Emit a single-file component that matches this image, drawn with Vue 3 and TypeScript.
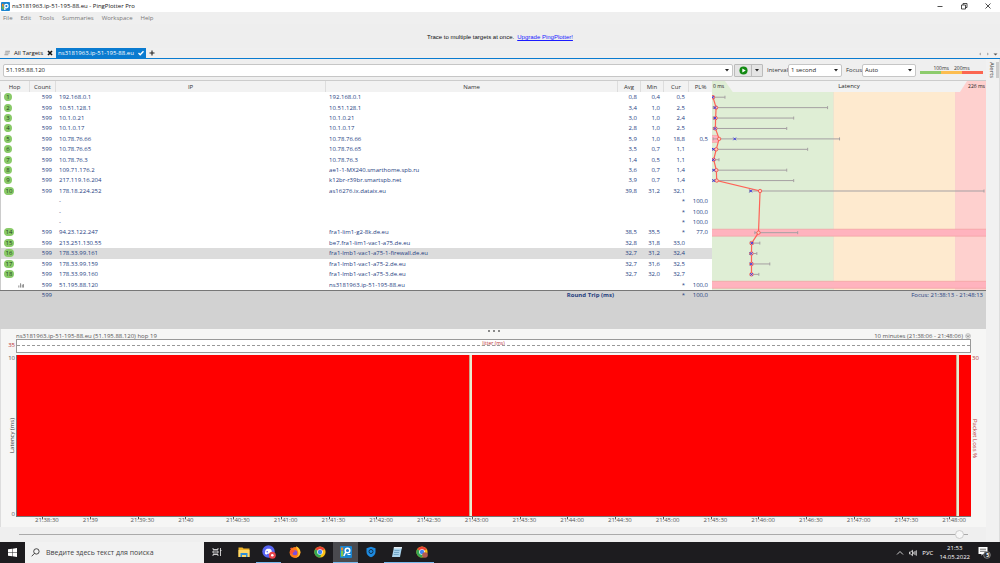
<script setup lang="ts">
import { ref } from 'vue'

interface Hop {
  n: string
  ip: string
  name: string
  avg: string
  min: string
  cur: string
  loss: string
  max?: number
  band?: number
}

const menus = ['File', 'Edit', 'Tools', 'Summaries', 'Workspace', 'Help']
const address = ref('51.195.88.120')
const timeline = ref(996)

const hops: Hop[] = [
  { n: '1', ip: '192.168.0.1', name: '192.168.0.1', avg: '0,8', min: '0,4', cur: '0,5', loss: '', max: 13 },
  { n: '2', ip: '10.51.128.1', name: '10.51.128.1', avg: '3,4', min: '1,0', cur: '2,5', loss: '', max: 116 },
  { n: '3', ip: '10.1.0.21', name: '10.1.0.21', avg: '3,0', min: '1,0', cur: '2,4', loss: '', max: 82 },
  { n: '4', ip: '10.1.0.17', name: '10.1.0.17', avg: '2,8', min: '1,0', cur: '2,5', loss: '', max: 75 },
  { n: '5', ip: '10.78.76.66', name: '10.78.76.66', avg: '5,9', min: '1,0', cur: '18,8', loss: '0,5', max: 128, band: 6 },
  { n: '6', ip: '10.78.76.65', name: '10.78.76.65', avg: '3,5', min: '0,7', cur: '1,1', loss: '', max: 96 },
  { n: '7', ip: '10.78.76.3', name: '10.78.76.3', avg: '1,4', min: '0,5', cur: '1,1', loss: '', max: 7 },
  { n: '8', ip: '109.71.176.2', name: 'ae1-1-MX240.smarthome.spb.ru', avg: '3,6', min: '0,7', cur: '1,4', loss: '', max: 75 },
  { n: '9', ip: '217.119.16.204', name: 'k12br-r39br.smartspb.net', avg: '3,9', min: '0,7', cur: '1,4', loss: '', max: 82 },
  { n: '10', ip: '178.18.224.252', name: 'as16276.ix.dataix.eu', avg: '39,8', min: '31,2', cur: '32,1', loss: '', max: 273 },
  { n: '', ip: '-', name: '', avg: '', min: '', cur: '*', loss: '100,0' },
  { n: '', ip: '-', name: '', avg: '', min: '', cur: '*', loss: '100,0' },
  { n: '', ip: '-', name: '', avg: '', min: '', cur: '*', loss: '100,0' },
  { n: '14', ip: '94.23.122.247', name: 'fra1-lim1-g2-8k.de.eu', avg: '38,5', min: '35,5', cur: '*', loss: '77,0', max: 86, band: 275 },
  { n: '15', ip: '213.251.130.55', name: 'be7.fra1-lim1-vac1-a75.de.eu', avg: '32,8', min: '31,8', cur: '33,0', loss: '', max: 48 },
  { n: '16', ip: '178.33.99.161', name: 'fra1-lmb1-vac1-a75-1-firewall.de.eu', avg: '32,7', min: '31,2', cur: '32,4', loss: '', max: 45 },
  { n: '17', ip: '178.33.99.159', name: 'fra1-lmb1-vac1-a75-2.de.eu', avg: '32,7', min: '31,6', cur: '32,5', loss: '', max: 58 },
  { n: '18', ip: '178.33.99.160', name: 'fra1-lmb1-vac1-a75-3.de.eu', avg: '32,7', min: '32,0', cur: '32,7', loss: '', max: 47 },
  { n: 'end', ip: '51.195.88.120', name: 'ns3181963.ip-51-195-88.eu', avg: '', min: '', cur: '*', loss: '100,0', band: 275 },
]

const ms = (s: string): number => parseFloat(s.replace(',', '.')) * 1.212
const pitch = 198 / 19
const marks = hops.map((h, i) => ({
  y: pitch * (i + 0.5),
  band: h.band,
  max: h.max,
  avg: h.avg ? ms(h.avg) : null,
  min: h.min ? ms(h.min) : 0,
  cur: h.cur !== '*' ? ms(h.cur) : null,
}))
const route = marks
  .filter((m) => m.avg !== null)
  .map((m) => `${m.avg},${m.y}`)
  .join(' ')

const ticks = [
  '21:38:30', '21:39', '21:39:30', '21:40', '21:40:30', '21:41:00', '21:41:30', '21:42:00', '21:42:30', '21:43:00',
  '21:43:30', '21:44:00', '21:44:30', '21:45:00', '21:45:30', '21:46:00', '21:46:30', '21:47:00', '21:47:30', '21:48:00',
]
</script>

<template>
  <div class="desktop">
    <header class="titlebar">
      <svg class="app-icon" viewBox="0 0 10 10">
        <rect width="10" height="10" rx="1" fill="#1a84d0" />
        <path d="M1 2h2v6H1z" fill="#f08a24" />
        <path d="M1 5h2v3H1z" fill="#5cb85c" />
        <circle cx="6" cy="4.500" r="2.600" fill="#fff" />
        <circle cx="6" cy="4.500" r="1.200" fill="#1a84d0" />
        <path d="M3.500 6h1.500v3H3.500z" fill="#fff" />
      </svg>
      <h1>ns3181963.ip-51-195-88.eu - PingPlotter Pro</h1>
      <div class="window-buttons">
        <button aria-label="Minimize"><svg viewBox="0 0 8 8"><path d="M1.500 4.500h5" /></svg></button>
        <button aria-label="Restore"><svg viewBox="0 0 8 8"><path d="M1.500 3h4v4h-4zM3 3V1.500h4V5.500H5.500" /></svg></button>
        <button aria-label="Close"><svg viewBox="0 0 8 8"><path d="M1.500 1.500l5 5M6.500 1.500l-5 5" /></svg></button>
      </div>
    </header>

    <nav class="menubar">
      <button v-for="m in menus" :key="m">{{ m }}</button>
    </nav>

    <div class="banner">
      <span>Trace to multiple targets at once.</span>
      <a href="#">Upgrade PingPlotter!</a>
    </div>

    <div class="tabs">
      <button class="tab">
        <svg class="lines" viewBox="0 0 7 6"><path d="M1.500 1H7M1 3h5.500M.5 5H5" /></svg>
        All Targets
        <svg class="glyph" viewBox="0 0 6 6"><path d="M1 1l4 4M5 1L1 5" stroke="#111" stroke-width="1.600" /></svg>
      </button>
      <button class="tab active">
        ns3181963.ip-51-195-88.eu
        <svg class="glyph" viewBox="0 0 6 6"><path d="M.5 3l1.700 1.800L5.500 1.200" stroke="#fff" stroke-width="1.400" fill="none" /></svg>
      </button>
      <button class="tab add" aria-label="New tab">
        <svg class="glyph" viewBox="0 0 6 6"><path d="M3 .5v5M.5 3h5" stroke="#222" stroke-width="1.100" /></svg>
      </button>
      <svg class="tab-nav" viewBox="0 0 20 6">
        <path d="M3 1.500v3L1 3zM9 1.500v3l2-1.500z" fill="#aaa" />
        <path d="M15.500 2.500h4l-2 2z" fill="#555" />
      </svg>
    </div>

    <div class="workspace">
      <main class="main">
        <div class="toolbar">
          <div class="combo address">
            <input v-model="address" aria-label="Target address" />
            <svg class="caret" viewBox="0 0 4 3"><path d="M0 0h4L2 2.500z" /></svg>
          </div>
          <div class="run">
            <button aria-label="Start trace">
              <svg viewBox="0 0 10 10">
                <circle cx="5" cy="5" r="4.500" fill="#128a12" />
                <path d="M3.700 2.700v4.600L7.500 5z" fill="#fff" />
              </svg>
            </button>
            <button class="more" aria-label="Trace options"><svg class="caret" viewBox="0 0 4 3"><path d="M0 0h4L2 2.500z" /></svg></button>
          </div>
          <label for="interval">Interval</label>
          <div class="combo">
            <select id="interval"><option>1 second</option></select>
            <svg class="caret" viewBox="0 0 4 3"><path d="M0 0h4L2 2.500z" /></svg>
          </div>
          <label class="focus-label" for="focus">Focus</label>
          <div class="combo">
            <select id="focus"><option>Auto</option></select>
            <svg class="caret" viewBox="0 0 4 3"><path d="M0 0h4L2 2.500z" /></svg>
          </div>
          <div class="legend">
            <div class="legend-text"><span>100ms</span><span>200ms</span></div>
            <div class="legend-bar"><i class="g"></i><i class="o"></i><i class="r"></i></div>
          </div>
        </div>

        <section class="trace">
          <table>
            <colgroup>
              <col class="c-hop" /><col class="c-count" /><col /><col class="c-name" />
              <col class="c-num" /><col class="c-num" /><col class="c-cur" /><col class="c-num" />
            </colgroup>
            <thead>
              <tr>
                <th>Hop</th><th>Count</th><th>IP</th><th>Name</th><th>Avg</th><th>Min</th><th>Cur</th><th>PL%</th>
              </tr>
            </thead>
            <tbody>
              <tr v-for="(h, i) in hops" :key="i" :class="{ selected: h.n === '16' }">
                <td class="hop">
                  <svg v-if="h.n === 'end'" class="bars" viewBox="0 0 7 6"><path d="M1 6V3.500M3 6V1M5 6V2.500M6.500 6V2" /></svg>
                  <span v-else-if="h.n" class="badge" :class="{ wide: h.n.length > 1 }">{{ h.n }}</span>
                </td>
                <td class="num">{{ h.ip === '-' ? '' : '599' }}</td>
                <td class="txt">{{ h.ip }}</td>
                <td class="txt">{{ h.name }}</td>
                <td class="num">{{ h.avg }}</td>
                <td class="num">{{ h.min }}</td>
                <td class="num">{{ h.cur }}</td>
                <td class="num">{{ h.loss }}</td>
              </tr>
            </tbody>
            <tfoot>
              <tr>
                <td></td>
                <td class="num">599</td>
                <td></td>
                <td class="num"><b>Round Trip (ms)</b></td>
                <td></td><td></td>
                <td class="num">*</td>
                <td class="num">100,0</td>
              </tr>
            </tfoot>
          </table>

          <div class="latency">
            <div class="latency-head">
              <span class="low">0 ms</span>
              <span>Latency</span>
              <span class="high">226 ms</span>
            </div>
            <svg class="graph" viewBox="0 0 275 198" preserveAspectRatio="none">
              <rect width="122" height="198" fill="#dfeed5" />
              <rect x="122" width="122" height="198" fill="#feeacf" />
              <rect x="244" width="31" height="198" fill="#fed0ce" />
              <g v-for="(m, i) in marks" :key="i">
                <g v-if="m.band">
                  <rect x="0" :y="m.y - 3.500" :width="m.band" height="7" fill="#ffb3be" />
                  <path :d="`M0 ${m.y - 3.500}h${m.band}M0 ${m.y + 3.500}h${m.band}`" stroke="#f09a9a" stroke-width=".6" />
                </g>
                <path
                  v-if="m.max"
                  :d="`M${m.min} ${m.y}H${m.max}M${m.max} ${m.y - 1.500}v3M${m.min} ${m.y - 1.500}v3`"
                  stroke="#a5a0a2" stroke-width="1"
                />
              </g>
              <polyline :points="route" fill="none" stroke="#ff6257" stroke-width="1.200" />
              <g v-for="(m, i) in marks" :key="'p' + i">
                <circle v-if="m.avg !== null" :cx="m.avg" :cy="m.y" r="1.700" fill="#ffc9bd" stroke="#f4574d" stroke-width=".9" />
                <path
                  v-if="m.cur !== null"
                  :d="`M${m.cur - 1.300} ${m.y - 1.300}l2.600 2.600M${m.cur + 1.300} ${m.y - 1.300}l-2.600 2.600`"
                  stroke="#3838e0" stroke-width="1"
                />
              </g>
            </svg>
            <div class="focus-range">Focus: 21:38:13 - 21:48:13</div>
          </div>
        </section>

        <section class="timeline">
          <div class="grip"><i></i><i></i><i></i></div>
          <div class="timeline-head">
            <span>ns3181963.ip-51-195-88.eu (51.195.88.120) hop 19</span>
            <span class="period">10 minutes (21:38:06 - 21:48:06)
              <svg viewBox="0 0 6 6"><circle cx="3" cy="3" r="2.500" fill="#ddd" stroke="#aaa" stroke-width=".5" /><path d="M1.800 2.400L3 3.800l1.200-1.400" fill="none" stroke="#666" stroke-width=".7" /></svg>
            </span>
          </div>
          <div class="jitter-row">
            <span class="axis red">35</span>
            <div class="jitter"><span>Jitter (ms)</span></div>
          </div>
          <div class="plot-row">
            <div class="left-axis">
              <span>10</span><span class="rot left">Latency (ms)</span><span>0</span>
            </div>
            <div class="plot">
              <i class="loss a"></i><i class="gap"></i><i class="loss b"></i><i class="gap"></i><i class="loss c"></i>
            </div>
            <div class="right-axis"><span>30</span><span class="rot">Packet Loss %</span></div>
          </div>
          <div class="ticks"><span v-for="t in ticks" :key="t">{{ t }}</span></div>
        </section>

        <div class="scrub">
          <input v-model="timeline" type="range" min="0" max="1000" aria-label="Timeline position" />
        </div>
      </main>

      <aside class="alerts">
        <button>Alerts</button>
        <i class="handle"></i>
      </aside>
    </div>

    <footer class="taskbar">
      <button class="start" aria-label="Start">
        <svg viewBox="0 0 10 10"><path d="M0 1.500L4.500.8v3.900H0zM5 .7L10 0v4.700H5zM0 5.200h4.500v3.900L0 8.500zM5 5.200h5V10l-5-.7z" fill="#fff" /></svg>
      </button>
      <label class="search">
        <svg viewBox="0 0 10 10"><circle cx="6" cy="3.800" r="3" /><path d="M3.800 6L.8 9.200" /></svg>
        <input type="text" placeholder="Введите здесь текст для поиска" aria-label="Поиск" />
      </label>
      <div class="apps">
        <button aria-label="Task view">
          <svg viewBox="0 0 12 12"><path d="M2 2v1.500h5V2M2 10V8.500h5V10M2 5h5v2H2zM9.500 2v8M9 4.500h1.500" fill="none" stroke="#ddd" stroke-width=".9" /></svg>
        </button>
        <button aria-label="File Explorer">
          <svg viewBox="0 0 12 12"><path d="M.5 1.500h4l1 1h6V11H.5z" fill="#f0b429" /><path d="M.5 4h11v7H.5z" fill="#ffd868" /><path d="M2.500 7h7v4H8V9H4v2H2.500z" fill="#2f8fd8" /></svg>
        </button>
        <button class="running" aria-label="Discord">
          <svg class="large" viewBox="0 0 14 14"><circle cx="6.500" cy="6.500" r="6.200" fill="#5865f2" /><path d="M3 8.800C3 6 3.600 4.500 4.300 4.200c1.400-.5 3-.5 4.400 0C9.400 4.500 10 6 10 8.800c-.8.700-1.500.8-1.900.8l-.5-.8H5.400l-.5.800C4.500 9.600 3.800 9.500 3 8.800z" fill="#fff" /><circle cx="5.200" cy="6.800" r=".8" fill="#5865f2" /><circle cx="10.300" cy="10.200" r="3.500" fill="#e8444a" /><circle cx="10.300" cy="10.200" r="1.300" fill="#fff" /></svg>
        </button>
        <button aria-label="Firefox">
          <svg viewBox="0 0 12 12"><circle cx="6" cy="6.500" r="5.400" fill="#ff7a1a" /><path d="M7 .3c2.900 1.200 4.500 3.500 4.400 6.300C11 9.500 9 11.700 6 11.900c3-1.500 4.200-4 3-6.500C8.500 3.500 7 2.500 7 .3z" fill="#ffcb2e" /><path d="M1 3l1.200-1.700L3.500 3z" fill="#ff4b3a" /><circle cx="5.800" cy="6.800" r="2.500" fill="#7a4fe0" /><path d="M1 4.500C3 3.500 5 4 6.500 5.500 4.500 5 4 6.500 4 7.500L1 8z" fill="#ff5530" /></svg>
        </button>
        <button aria-label="Chrome">
          <svg viewBox="0 0 12 12"><circle cx="6" cy="6" r="5.600" fill="#fbc116" /><path d="M6 6L1.150 3.200A5.600 5.600 0 0 1 10.850 3.200z" fill="#ea4335" /><path d="M6 6L1.150 3.200A5.600 5.600 0 0 0 6 11.600L8 7z" fill="#34a853" /><circle cx="6" cy="6" r="2.800" fill="#fff" /><circle cx="6" cy="6" r="2.200" fill="#4285f4" /></svg>
        </button>
        <button class="running current" aria-label="PingPlotter">
          <svg viewBox="0 0 12 12"><rect width="12" height="12" rx="1" fill="#1a84d0" /><path d="M1 1.500h2.200v3H1z" fill="#f08a24" /><path d="M1 5h2.200v5.500H1z" fill="#7cc84c" /><circle cx="7.500" cy="4.500" r="2.300" fill="none" stroke="#fff" stroke-width="1.500" /><path d="M5.800 6L3.800 10" stroke="#fff" stroke-width="1.500" /><path d="M7.500 8.500h3" stroke="#fff" stroke-width="1" /></svg>
        </button>
        <button aria-label="Security">
          <svg viewBox="0 0 12 12"><path d="M6 .8l4.500 1.500V6c0 2.500-2 4.300-4.500 5.300C3.500 10.300 1.500 8.500 1.500 6V2.300z" fill="#1d8ae0" /><circle cx="6" cy="5.500" r="2" fill="none" stroke="#10314e" /></svg>
        </button>
        <button class="running" aria-label="Notepad">
          <svg viewBox="0 0 12 12"><path d="M3 1h8L9 11H1z" fill="#a9d4ee" /><path d="M3 1h8l-.3 1.500h-8z" fill="#e8eef2" /><path d="M3.500 4.500h5M3 6.500h5M2.700 8.500h5" stroke="#4f88ad" stroke-width=".6" /></svg>
        </button>
        <button class="running" aria-label="Chrome profile">
          <svg viewBox="0 0 12 12"><circle cx="6" cy="6" r="5.600" fill="#fbc116" /><path d="M6 6L1.150 3.200A5.600 5.600 0 0 1 10.850 3.200z" fill="#ea4335" /><path d="M6 6L1.150 3.200A5.600 5.600 0 0 0 6 11.600L8 7z" fill="#34a853" /><circle cx="6" cy="6" r="2.800" fill="#fff" /><circle cx="6" cy="6" r="2.200" fill="#4285f4" /><circle cx="9" cy="9" r="2.800" fill="#b25b52" /></svg>
        </button>
      </div>
      <div class="tray">
        <svg viewBox="0 0 8 8"><path d="M1 5.500L4 2.500l3 3" /></svg>
        <svg viewBox="0 0 8 8"><path d="M.5 3v2h1.200L3.500 6.700V1.300L1.700 3zM4.800 2.800v2.400M6 2v4M7.300 1.300v5.400" /></svg>
        <span>РУС</span>
        <time><span>21:53</span><span>14.05.2022</span></time>
        <button class="notify" aria-label="Notifications">
          <svg viewBox="0 0 13 13"><path d="M.5 1h9v7H5L3.500 9.700V8h-3z" fill="#fff" /><path d="M2 3.200h6M2 5.300h6" stroke="#333" stroke-width=".7" /><circle cx="9" cy="9" r="3.400" fill="#333" stroke="#aaa" stroke-width=".6" /></svg>
          <b>5</b>
        </button>
      </div>
    </footer>
  </div>
</template>

<style>
html, body { background: #f0f0f0; }
</style>

<style scoped>
.desktop {
  min-height: 100vh;
  display: flex;
  flex-direction: column;
  background: #efefef;
  color: #222;
  font: 6px/8px "Open Sans", "Noto Sans", sans-serif;
}
.desktop * { box-sizing: border-box; }
button, input, select { font: inherit; color: inherit; border: 0; padding: 0; margin: 0; background: none; outline: 0; }
svg { display: block; flex: none; }
i { display: block; }

.titlebar { height: 12px; display: flex; align-items: center; gap: 2px; padding-left: 1px; background: #fff; }
.titlebar h1 { margin: 0; font-size: 6px; font-weight: 400; color: #111; }
.app-icon { width: 9px; height: 9px; }
.window-buttons { margin-left: auto; display: flex; }
.window-buttons button { width: 24px; display: flex; justify-content: center; }
.window-buttons svg { width: 8px; height: 8px; fill: none; stroke: #222; stroke-width: 0.800; }

.menubar { height: 12px; display: flex; align-items: center; gap: 8px; padding-left: 3px; color: #777; }

.banner { height: 24px; display: flex; justify-content: center; align-items: center; gap: 3px; padding-top: 2px; font-family: "Liberation Sans", Arial, sans-serif; color: #111; background: #eee; }
.banner a { color: #1a1aff; }

.tabs { height: 11px; display: flex; align-items: stretch; border-bottom: 1px solid #0a7bd0; }
.tab { display: flex; align-items: center; gap: 4px; padding: 0 3px 0 4px; color: #111; white-space: nowrap; }
.tab.active { background: #0a7bd0; color: #fff; padding: 0 2px; }
.tab.add { padding: 0 3px; }
.lines { width: 6px; height: 6px; fill: none; stroke: #777; stroke-width: 0.800; }
.glyph { width: 6px; height: 6px; }
.tab-nav { width: 20px; height: 6px; margin: 3px 2px 0 auto; }

.workspace { flex: 1; display: flex; }
.main { flex: 1; min-width: 0; display: flex; flex-direction: column; }
.alerts { width: 14px; display: flex; justify-content: space-between; align-items: flex-start; padding: 3px 0 0 2px; background: #f1f1f1; border-right: 1px solid #ddd; }
.alerts button { writing-mode: vertical-rl; line-height: 8px; color: #444; }
.handle { width: 3px; height: 16px; background: #ccc; }

.toolbar { height: 21px; display: flex; align-items: center; padding: 1px 3px 0; color: #333; }
.combo { height: 13px; width: 54px; display: flex; align-items: center; padding-right: 3px; background: #fff; border: 1px solid #c6c6c6; border-radius: 2px; }
.combo input, .combo select { flex: 1; min-width: 0; appearance: none; padding-left: 2px; line-height: 9px; color: #222; }
.address { flex: 1; margin-right: 1px; }
.caret { width: 4px; height: 3px; fill: #222; }
.run { display: flex; height: 13px; margin-right: 4px; border: 1px solid #bbb; background: #e4e4e4; border-radius: 1px; }
.run button { width: 16px; display: flex; align-items: center; justify-content: center; }
.run button svg { width: 9px; height: 9px; }
.run .more { width: 11px; border-left: 1px solid #bbb; }
.run .more svg { width: 4px; height: 3px; }
.toolbar label { width: 21px; }
.toolbar .focus-label { width: 16px; margin-left: 4px; }
.legend { width: 63px; margin-left: 4px; }
.legend-text { display: flex; justify-content: center; gap: 5px; font-size: 5px; line-height: 5px; }
.legend-bar { display: flex; height: 3px; }
.legend-bar i { flex: 1; }
.g { background: #8ccb6c; }
.o { background: #fcbd50; }
.r { background: #fb6650; }

.trace { display: flex; align-items: flex-start; height: 249px; background: #d2d2d2; border-top: 1px solid #ccc; }
table { flex: 712; min-width: 0; width: 0; table-layout: fixed; border-collapse: separate; border-spacing: 0; color: #25407f; }
.c-hop { width: 30px; }
.c-count { width: 26px; }
.c-name { width: 41%; }
.c-num { width: 23px; }
.c-cur { width: 25px; }
th, td { padding: 0; white-space: nowrap; line-height: 8px; }
th { height: 11px; font-weight: 400; color: #333; background: #f2f2f2; border-right: 1px solid #ddd; }
th:last-child { border-right: 0; }
tbody { height: 198px; background: #fff; }
tbody td:first-child { border-left: 1px solid #ccc; }
.selected td { background: #dcdcdc; }
.num { text-align: right; padding-right: 4px; }
.txt { padding-left: 3px; }
tfoot td { border-top: 1px solid #777; }
.badge { display: block; width: 8px; height: 8px; margin-left: 3px; border-radius: 4px; background: #89ca68; color: #244020; text-align: center; }
.badge.wide { width: 10px; }
.bars { width: 6px; height: 6px; margin-left: 17px; stroke: #777; stroke-width: 1; }
b { font-weight: 700; }

.latency { flex: 274; min-width: 0; }
.latency-head { height: 11px; display: flex; justify-content: space-between; align-items: center; line-height: 11px; background: #f2f2f2; color: #222; }
.low, .high { width: 26px; font-size: 5px; }
.low { padding-left: 1px; background: #dfeed5; clip-path: polygon(0 0, 50% 0, 80% 100%, 0 100%); }
.high { padding-right: 1px; text-align: right; background: #fed0ce; clip-path: polygon(27% 0, 100% 0, 100% 100%, 0 100%); }
.graph { width: 100%; height: 198px; }
.focus-range { border-top: 1px solid #777; text-align: right; padding-right: 3px; color: #25407f; }

.timeline { flex: 1; display: flex; flex-direction: column; background: #f6f6f5; border-left: 1px solid #ddd; color: #555; }
.grip { height: 3px; display: flex; justify-content: center; align-items: flex-end; gap: 3px; }
.grip i { width: 2px; height: 2px; border-radius: 1px; background: #666; }
.timeline-head { display: flex; justify-content: space-between; padding: 0 15px; height: 7px; line-height: 8px; }
.period { display: flex; align-items: center; gap: 2px; }
.period svg { width: 6px; height: 6px; }
.jitter-row { display: flex; height: 14px; padding-right: 15px; }
.axis { width: 15px; text-align: right; padding-right: 1px; line-height: 12px; }
.red { color: #b33; }
.jitter { flex: 1; border: 1px solid #999; background: #fff; position: relative; text-align: center; line-height: 7px; color: #b33; font-size: 5px; }
.jitter::after { content: ""; position: absolute; left: 0; right: 0; top: 5px; border-top: 1px dashed #999; }
.plot-row { flex: 1; display: flex; margin-top: 2px; }
.left-axis { width: 15px; display: flex; flex-direction: column; justify-content: space-between; align-items: flex-end; padding-right: 1px; line-height: 6px; }
.rot { writing-mode: vertical-rl; }
.left { transform: rotate(180deg); color: #333; }
.plot { flex: 1; display: flex; border-left: 1px solid #777; border-bottom: 1px solid #777; }
.loss { background: #f00; }
.gap { width: 3px; background: #e9ecd0; border-left: 1px solid #c9a78c; }
.loss.a { flex: 452; }
.loss.b { flex: 484; }
.loss.c { flex: 12; }
.right-axis { width: 15px; display: flex; flex-direction: column; align-items: flex-start; padding-left: 1px; color: #b33; line-height: 6px; }
.right-axis .rot { margin: auto 0; }
.ticks { display: grid; grid-template-columns: repeat(20, 5%); margin: 0 15px; height: 10px; line-height: 7px; }
.ticks span { padding-left: 19px; background: linear-gradient(#555, #555) 26px 0 / 1px 2px no-repeat; }

.scrub { height: 15px; padding: 0 18px 0 19px; display: flex; align-items: center; background: #efefef; }
.scrub input { width: 100%; height: 10px; appearance: none; background: linear-gradient(#aaa, #aaa) center / 100% 1px no-repeat; }
.scrub input::-webkit-slider-thumb { appearance: none; width: 9px; height: 9px; border-radius: 50%; border: 1px solid #ccc; background: #f7f7f7; }

.taskbar { height: 21px; display: flex; align-items: stretch; background: #1d1c1f; color: #fff; }
.start { width: 25px; display: flex; align-items: center; justify-content: center; }
.start svg { width: 9px; height: 9px; }
.search { width: 179px; display: flex; align-items: center; gap: 6px; padding-left: 6px; background: #f2f2f2; }
.search svg { width: 9px; height: 9px; fill: none; stroke: #222; stroke-width: 0.900; }
.search input { flex: 1; min-width: 0; font-size: 7px; }
.search input::placeholder { color: #444; opacity: 1; }
.apps { display: flex; }
.apps button { width: 25px; display: flex; align-items: center; justify-content: center; margin-right: 1px; border-bottom: 1px solid transparent; }
.apps button:nth-child(4n + 4) { margin-right: 0; }
.apps button:nth-child(4n + 2) { margin-right: 0; }
.apps button:first-child { margin-right: 2px; }
.apps .running { border-bottom-color: #76b9ed; }
.apps .current { background: #4a4a4e; }
.apps svg { width: 12px; height: 12px; }
.apps .large { width: 14px; height: 14px; }
.tray { margin-left: auto; display: flex; align-items: center; gap: 5px; padding-right: 9px; }
.tray > svg { width: 8px; height: 8px; fill: none; stroke: #ddd; stroke-width: 0.900; }
.tray time { display: flex; flex-direction: column; align-items: center; line-height: 9px; margin-left: 1px; }
.notify { position: relative; margin-left: 3px; }
.notify svg { width: 13px; height: 13px; }
.notify b { position: absolute; right: 2px; bottom: 0; font-size: 5px; line-height: 8px; color: #fff; }
</style>
